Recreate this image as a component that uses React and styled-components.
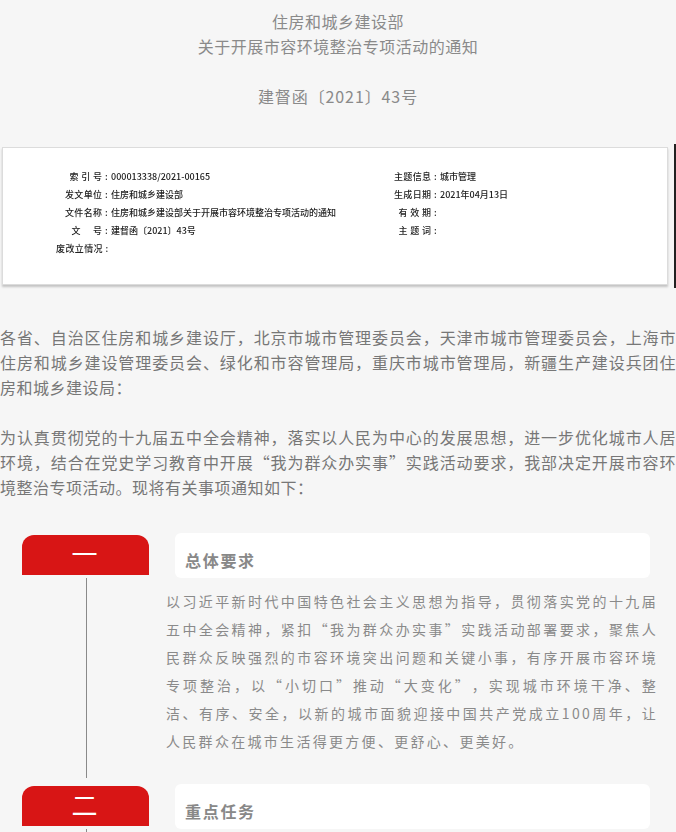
import React from "react"
import styled, { createGlobalStyle } from "styled-components"

const GlobalStyle = createGlobalStyle`
  html, body {
    margin: 0;
    padding: 0;
    background: #f6f6f6;
  }
  body {
    font-family: "Noto Sans CJK SC", "Liberation Sans", sans-serif;
    text-spacing-trim: space-all;
  }
`

const Page = styled.div`
  width: 676px;
  height: 832px;
  overflow: hidden;
  padding-top: 9px;
  box-sizing: border-box;
`

const Heading = styled.div`
  text-align: center;
  font-size: 16px;
  line-height: 25px;
  letter-spacing: ${(p) => p.$spacing || 0.5}px;
  color: #8a8a8a;
  margin-bottom: ${(p) => p.$gap || 0}px;
`

const DocFrame = styled.div`
  display: flex;
  justify-content: space-between;
  height: 144px;
  margin-top: 35px;
`

const DocCard = styled.div`
  width: 666px;
  height: 138px;
  margin: 3px 0 0 2px;
  box-sizing: border-box;
  padding: 19px 0 0 53px;
  background: #fff;
  border: 1px solid #dcdcdc;
  box-shadow: 0 2px 2px #c4c4c4;
  display: grid;
  grid-template-columns: 52px 283px 44px 1fr;
  grid-auto-rows: 18px;
  column-gap: 1px;
  align-items: center;
  font-size: 9px;
  font-weight: 500;
  color: #222;
  filter: blur(0.35px);
`

const DocLabel = styled.span`
  text-align: right;
  white-space: pre;
  letter-spacing: 0.4px;
`

const DocValue = styled.span`
  padding-left: 2px;
  white-space: nowrap;
`

const EdgeBar = styled.div`
  width: 2px;
  background: #222;
`

const Paragraph = styled.p`
  margin: ${(p) => p.$top}px 0 0;
  font-size: 16px;
  line-height: 25px;
  letter-spacing: 0.5px;
  color: #777;
  text-align: justify;
`

const Section = styled.section`
  display: grid;
  grid-template-columns: 127px 1fr;
  column-gap: 26px;
  padding: 0 26px 0 22px;
  margin-top: ${(p) => p.$top || 0}px;
  min-height: ${(p) => p.$minHeight || 0}px;
`

const Rail = styled.div`
  display: flex;
  flex-direction: column;
  align-items: center;
`

const Tab = styled.div`
  width: 127px;
  height: 40px;
  margin-top: 2px;
  background: #d81515;
  border-radius: 12px 12px 0 0;
  color: #fff;
  font-size: 26px;
  line-height: 36px;
  text-align: center;
  text-indent: -2px;
`

const RailLine = styled.div`
  flex: 1;
  width: 1px;
  margin: 3px 0 6px 1px;
  background: #8a8a8a;
`

const TitleCard = styled.div`
  height: 45px;
  box-sizing: border-box;
  padding: 15px 0 0 10px;
  background: #fff;
  border-radius: 6px;
  font-size: 16px;
  font-weight: 700;
  line-height: 25px;
  letter-spacing: 1.7px;
  color: #888;
`

const SectionText = styled.p`
  margin: 9px -8px 29px -9px;
  font-size: 14px;
  line-height: 28px;
  letter-spacing: 2.3px;
  color: #8a8a8a;
  text-align: justify;
`

const docRows = [
  ["索 引 号 :", "000013338/2021-00165", "主题信息 :", "城市管理"],
  ["发文单位 :", "住房和城乡建设部", "生成日期 :", "2021年04月13日"],
  ["文件名称 :", "住房和城乡建设部关于开展市容环境整治专项活动的通知", "有 效 期 :", ""],
  ["文     号 :", "建督函〔2021〕43号", "主 题 词 :", ""],
  ["废改立情况 :", "", "", ""],
]

export default function App() {
  return (
    <Page>
      <GlobalStyle />
      <Heading>住房和城乡建设部</Heading>
      <Heading $gap={25}>关于开展市容环境整治专项活动的通知</Heading>
      <Heading $spacing={0.9}>建督函〔2021〕43号</Heading>

      <DocFrame>
        <DocCard>
          {docRows.map((row, i) => (
            <React.Fragment key={i}>
              <DocLabel>{row[0]}</DocLabel>
              <DocValue>{row[1]}</DocValue>
              <DocLabel>{row[2]}</DocLabel>
              <DocValue>{row[3]}</DocValue>
            </React.Fragment>
          ))}
        </DocCard>
        <EdgeBar />
      </DocFrame>

      <Paragraph $top={37}>
        各省、自治区住房和城乡建设厅，北京市城市管理委员会，天津市城市管理委员会，上海市住房和城乡建设管理委员会、绿化和市容管理局，重庆市城市管理局，新疆生产建设兵团住房和城乡建设局：
      </Paragraph>
      <Paragraph $top={25}>
        为认真贯彻党的十九届五中全会精神，落实以人民为中心的发展思想，进一步优化城市人居环境，结合在党史学习教育中开展“我为群众办实事”实践活动要求，我部决定开展市容环境整治专项活动。现将有关事项通知如下：
      </Paragraph>

      <Section $top={33}>
        <Rail>
          <Tab>一</Tab>
          <RailLine />
        </Rail>
        <div>
          <TitleCard>总体要求</TitleCard>
          <SectionText>
            以习近平新时代中国特色社会主义思想为指导，贯彻落实党的十九届五中全会精神，紧扣“我为群众办实事”实践活动部署要求，聚焦人民群众反映强烈的市容环境突出问题和关键小事，有序开展市容环境专项整治，以“小切口”推动“大变化”，实现城市环境干净、整洁、有序、安全，以新的城市面貌迎接中国共产党成立100周年，让人民群众在城市生活得更方便、更舒心、更美好。
          </SectionText>
        </div>
      </Section>

      <Section $minHeight={80}>
        <Rail>
          <Tab>二</Tab>
          <RailLine />
        </Rail>
        <div>
          <TitleCard>重点任务</TitleCard>
        </div>
      </Section>
    </Page>
  )
}
